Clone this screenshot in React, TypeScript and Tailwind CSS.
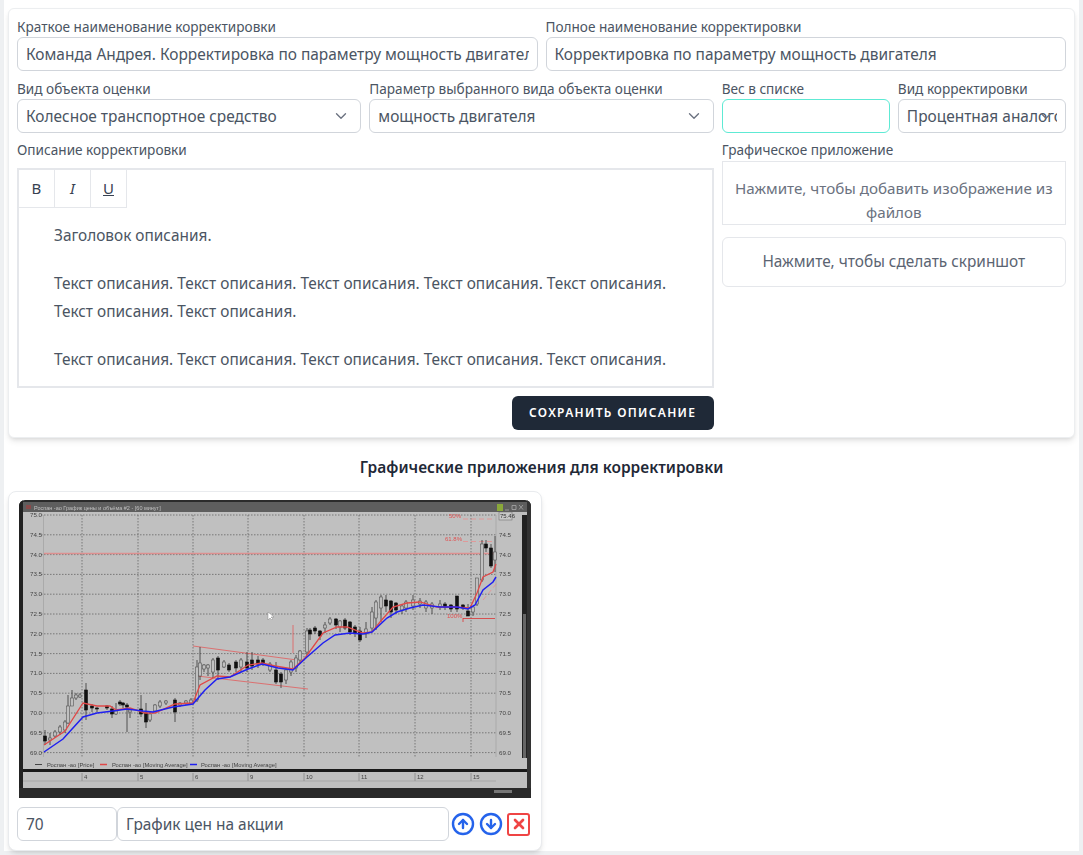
import React from "react";
import { CircleArrowUp, CircleArrowDown, X, ChevronDown } from "lucide-react";

const red: [number, number][] = [[44,745],[65,731],[83,703],[97,706],[110,706],[116,710],[130,708],[145,713],[155,713],[175,704],[193,703],[200,685],[217,676],[230,677],[248,665],[262,663],[275,666],[293,669],[305,658],[323,633],[337,627],[347,627],[363,633],[372,632],[380,622],[393,607],[407,603],[420,602],[437,607],[453,607],[470,608],[477,593],[483,577],[493,572],[496,564]];
const blue: [number, number][] = [[44,752],[63,739],[83,717],[97,713],[113,711],[127,709],[143,711],[153,712],[173,707],[193,704],[205,690],[217,679],[230,677],[248,669],[262,664],[278,668],[293,670],[307,657],[323,643],[335,635],[350,633],[363,634],[372,632],[387,618],[397,612],[410,608],[423,605],[440,607],[457,607],[468,609],[475,605],[483,590],[493,582],[496,577]];

// x, high, low, bodyTop, bodyBottom, black
const candles: [number, number, number, number, number, number][] = [
[45,730,745,736,741,1],[50,733,745,738,740,0],[55,730,738,732,736,0],[60,725,735,727,732,0],[65,720,733,722,730,0],[68,695,724,706,723,0],[72,690,706,698,706,0],[76,693,700,695,698,0],[80,693,698,695,697,0],
[86,683,720,690,710,1],[92,704,712,706,708,1],[97,707,712,708,709,1],[107,705,710,706,708,1],[112,706,718,709,714,1],[116,703,715,711,714,0],[120,700,706,702,704,1],[123,702,708,703,705,1],[127,703,732,705,707,1],[130,708,718,710,712,0],
[141,695,717,709,714,1],[146,703,728,713,722,1],[150,712,722,714,720,0],[155,704,712,705,711,0],[160,700,708,702,706,0],[166,700,705,701,703,0],[175,698,722,700,712,1],[180,702,707,703,705,0],[186,700,705,701,703,0],[191,698,704,700,703,0],
[197,660,702,667,700,0],[200,647,680,663,676,0],[204,664,672,665,669,0],[208,664,676,665,668,0],[213,658,678,660,672,0],[218,656,680,658,670,1],[224,660,668,662,667,0],[229,663,672,665,670,1],[236,660,672,662,668,1],[241,658,672,660,667,0],[247,652,672,662,668,1],[252,652,670,660,666,1],[258,656,668,660,664,1],[263,658,666,660,663,1],[270,662,672,664,670,0],[276,662,684,670,682,1],[281,672,688,674,682,1],[286,668,684,670,680,0],[291,660,676,662,672,0],[296,655,672,658,668,0],
[300,650,664,651,660,0],[307,628,655,631,652,0],[310,628,640,630,634,1],[315,626,634,628,631,1],[320,630,640,631,636,1],[325,622,633,625,628,0],[330,617,625,619,623,0],[336,618,629,619,625,1],[340,620,632,621,627,0],[345,618,630,620,628,1],[350,621,635,622,632,1],[355,625,637,627,633,1],[360,627,642,631,640,1],[366,622,638,629,634,0],[372,607,632,612,628,0],[376,600,630,602,618,0],[381,595,622,597,608,0],[386,595,612,600,606,1],[391,600,618,601,612,1],[396,602,614,603,610,1],[402,604,614,606,610,0],[406,600,612,602,608,0],[413,595,610,600,606,0],[420,598,608,601,604,0],[426,600,612,602,608,0],[432,602,614,604,608,0],[440,600,610,604,607,0],[445,602,610,604,607,1],[451,604,612,605,609,1],[457,596,612,596,609,1],[463,604,610,605,608,1],[468,604,615,611,616,1],[473,606,616,607,612,0],[477,578,606,578,604,0],[482,540,582,544,580,0],[486,540,552,544,548,1],[491,544,568,548,566,1],[495,536,572,552,560,0]];

function Chart() {
  const ys = ["75.0","74.5","74.0","73.5","73.0","72.5","72.0","71.5","71.0","70.5","70.0","69.5","69.0"];
  const xs = [82,138,193,248,304,359,415,471];
  const dates = ["4","5","6","9","10","11","12","15"];
  const yAt = (i: number) => 515 + i * 19.8;
  const pts = (a: [number, number][]) => a.map((p) => p.join(",")).join(" ");
  return (
    <svg viewBox="19 500 512 298" width="512" height="298" className="block rounded-t-md blur-[0.4px]">
      <rect x="19" y="500" width="512" height="298" fill="#2b2b2b" />
      <rect x="21" y="502" width="508" height="10" fill="#5e5e5e" />
      <rect x="23" y="512" width="504" height="258" fill="#c0c0c0" />
      <rect x="23" y="772" width="504" height="16" fill="#c0c0c0" />
      <text x="34" y="509.5" fontSize="5.5" fill="#c0c0c0" fontFamily="Liberation Sans, sans-serif">Роспан -ао График цены и объёма #2 - [60 минут]</text>
      <rect x="26" y="505" width="5" height="4" fill="#8a4a4a" />
      <rect x="497" y="504" width="6" height="7" fill="#8aa83a" />
      <path d="M505 510h4M512 505.500h4v4h-4zM519 505l4 4.500M523 505l-4 4.500" stroke="#aaa" strokeWidth="0.8" fill="none" />
      {ys.map((t, i) => (
        <g key={t}>
          <line x1="41" x2="496" y1={yAt(i)} y2={yAt(i)} stroke="#666" strokeWidth="0.8" strokeDasharray="1.500 1.500" />
          <text x="30" y={yAt(i) + 2} fontSize="6.2" fill="#444" fontFamily="Liberation Sans, sans-serif">{t}</text>
          {i > 0 && <text x="499" y={yAt(i) + 2} fontSize="6.2" fill="#444" fontFamily="Liberation Sans, sans-serif">{t}</text>}
        </g>
      ))}
      {xs.map((x, i) => (
        <g key={x}>
          <line x1={x} x2={x} y1="515" y2="757" stroke="#666" strokeWidth="0.8" strokeDasharray="1.500 1.500" />
          <line x1={x} x2={x} y1="773" y2="781" stroke="#888" strokeWidth="0.8" />
          <text x={x + 2} y="779" fontSize="6" fill="#444" fontFamily="Liberation Sans, sans-serif">{dates[i]}</text>
        </g>
      ))}
      <line x1="43.500" x2="43.500" y1="515" y2="757" stroke="#a5a5a5" strokeWidth="0.8" />
      <line x1="496" x2="496" y1="515" y2="757" stroke="#a5a5a5" strokeWidth="0.8" />
      <line x1="23" x2="496" y1="781" y2="781" stroke="#999" strokeWidth="0.6" />
      <line x1="44" x2="496" y1="553.500" y2="553.500" stroke="#dd9090" strokeWidth="1.400" />
      <path d="M193 646L297 660M197 676L308 689M293 625V653" stroke="#e25c5c" strokeWidth="0.8" fill="none" />
      <path d="M463 519H495M463 541.500H495M483 600L497 583" stroke="#e88" strokeWidth="0.7" strokeDasharray="5 3" fill="none" />
      <path d="M463 618.500H495M463 618V622" stroke="#d33" strokeWidth="0.8" fill="none" />
      <text x="449" y="518" fontSize="6" fill="#e05050" fontFamily="Liberation Sans, sans-serif">50%</text>
      <text x="445" y="541" fontSize="6" fill="#e05050" fontFamily="Liberation Sans, sans-serif">61.8%</text>
      <text x="447" y="618" fontSize="6" fill="#e05050" fontFamily="Liberation Sans, sans-serif">100%</text>
      {candles.map(([x, h, l, t, b, k]) => (
        <g key={x}>
          <line x1={x} x2={x} y1={h} y2={l} stroke="#333" strokeWidth="0.8" />
          <rect x={x - 1.500} y={t} width="3" height={Math.max(b - t, 1)} fill={k ? "#111" : "#c0c0c0"} stroke={k ? "#111" : "#555"} strokeWidth="0.6" />
        </g>
      ))}
      <polyline points={pts(red)} fill="none" stroke="#e04848" strokeWidth="1.300" />
      <polyline points={pts(blue)} fill="none" stroke="#2020f0" strokeWidth="1.500" />
      <path d="M268 612v8l2-2 2 2 1-1-2-2h3z" fill="#fff" stroke="#777" strokeWidth="0.4" />
      <rect x="499" y="512" width="13" height="8" fill="#c8c8c8" stroke="#666" strokeWidth="0.5" />
      <text x="500" y="518" fontSize="6" fill="#333" fontFamily="Liberation Sans, sans-serif">75.46</text>
      <rect x="522" y="515" width="5" height="243" fill="#222" />
      <rect x="523" y="614" width="3" height="144" fill="#666" />
      <line x1="35" x2="42" y1="764.500" y2="764.500" stroke="#444" strokeWidth="1" />
      <text x="47" y="766.500" fontSize="5.800" fill="#444" fontFamily="Liberation Sans, sans-serif">Роспан -ао [Price]</text>
      <line x1="100" x2="107" y1="764.500" y2="764.500" stroke="#e04848" strokeWidth="1.400" />
      <text x="112" y="766.500" fontSize="5.800" fill="#444" fontFamily="Liberation Sans, sans-serif">Роспан -ао [Moving Average]</text>
      <line x1="190" x2="197" y1="764.500" y2="764.500" stroke="#2020f0" strokeWidth="1.400" />
      <text x="201" y="766.500" fontSize="5.800" fill="#444" fontFamily="Liberation Sans, sans-serif">Роспан -ао [Moving Average]</text>
      <rect x="19" y="769" width="512" height="3" fill="#1a1a1a" />
      <rect x="19" y="500" width="4" height="298" fill="#222" />
      <rect x="527" y="500" width="4" height="298" fill="#333" />
      <rect x="19" y="788" width="512" height="10" fill="#2a2a2a" />
      <rect x="494" y="790" width="18" height="3" fill="#777" />
    </svg>
  );
}

const inputCls = "block w-full h-[34px] rounded-md border border-[#d1d5db] bg-white pl-[8px] pr-[8px] text-[15.45px] text-[#4b5563] outline-none";

function Field({ label, span, children }: { label: string; span: string; children: React.ReactNode }) {
  return (
    <div className={span}>
      <div className="h-[20px] text-[13.6px] leading-[20px] text-[#4b5563]">{label}</div>
      {children}
    </div>
  );
}

function Select({ value }: { value: string }) {
  return (
    <div className="relative">
      <input readOnly value={value} className={inputCls} />
      <ChevronDown size={18} strokeWidth={1.8} className="absolute right-[11px] top-[8px] text-[#6b7280]" />
    </div>
  );
}

export default function App() {
  const P1 = "Текст описания. Текст описания. Текст описания. Текст описания. Текст описания.";
  return (
    <div className="min-h-[855px] bg-[#eef0f2] font-['Noto_Sans',sans-serif] text-[#4b5563]">
      <div className="ml-[4px] w-[1075px] h-[851px] bg-white pl-[4px] pr-[4px] pt-[1px]">
        <div className="mt-[7px] h-[430px] w-[1067px] rounded-md border border-[#eceef0] bg-white px-[8px] pt-[8px] shadow-md">
          <div className="grid grid-cols-12 gap-x-2 gap-y-[8px]">
            <Field label="Краткое наименование корректировки" span="col-span-6">
              <input readOnly value="Команда Андрея. Корректировка по параметру мощность двигателя" className={inputCls} />
            </Field>
            <Field label="Полное наименование корректировки" span="col-span-6">
              <input readOnly value="Корректировка по параметру мощность двигателя" className={inputCls} />
            </Field>
            <Field label="Вид объекта оценки" span="col-span-4">
              <Select value="Колесное транспортное средство" />
            </Field>
            <Field label="Параметр выбранного вида объекта оценки" span="col-span-4">
              <Select value="мощность двигателя" />
            </Field>
            <Field label="Вес в списке" span="col-span-2">
              <input readOnly className="block h-[34px] w-full rounded-md border border-[#5eead4] bg-white outline-none" />
            </Field>
            <Field label="Вид корректировки" span="col-span-2">
              <Select value="Процентная аналоговая" />
            </Field>
          </div>
          <div className="mt-[7px] grid grid-cols-12 gap-x-2">
            <div className="col-span-8">
              <div className="h-[20px] text-[13.6px] leading-[20px]">Описание корректировки</div>
              <div className="mt-[8px] h-[220px] border-2 border-[#e5e7eb]">
                <div className="flex h-[38px]">
                  <div className="flex h-[38px] w-[36px] items-center justify-center border-r border-b border-[#e5e7eb] text-[15px] text-[#374151]">B</div>
                  <div className="flex h-[38px] w-[36px] items-center justify-center border-r border-b border-[#e5e7eb] text-[15px] italic text-[#374151]">I</div>
                  <div className="flex h-[38px] w-[36px] items-center justify-center border-r border-b border-[#e5e7eb] text-[15px] underline text-[#374151]">U</div>
                </div>
                <div className="pl-[35px] pr-[30px] pt-[14px] text-[15.4px] leading-[28px] text-[#4b5563]">
                  <p className="h-[28px] whitespace-nowrap">Заголовок описания.</p>
                  <p className="mt-[20px]">{P1} Текст описания. Текст описания.</p>
                  <p className="mt-[20px] whitespace-nowrap">{P1}</p>
                </div>
              </div>
              <div className="mt-[8px] flex justify-end">
                <button className="h-[34px] w-[202px] rounded-md bg-[#1f2937] text-[12px] font-semibold uppercase tracking-[0.11em] text-white">Сохранить описание</button>
              </div>
            </div>
            <div className="col-span-4">
              <div className="h-[20px] text-[13.6px] leading-[20px]">Графическое приложение</div>
              <div className="mt-[1px] flex h-[64px] items-center justify-center border border-[#e5e7eb] px-[4px] pt-[14px] text-center text-[15.2px] leading-[24px] text-[#6b7280]">
                Нажмите, чтобы добавить изображение из файлов
              </div>
              <div className="mt-[12px] flex h-[50px] items-center justify-center rounded-md border border-[#e5e7eb] text-[15.4px] text-[#5b6472]">
                Нажмите, чтобы сделать скриншот
              </div>
            </div>
          </div>
        </div>
        <h2 className="mt-[17px] h-[24px] text-center text-[15.5px] font-semibold leading-[24px] text-[#1f2937]">Графические приложения для корректировки</h2>
        <div className="mt-[12px] h-[360px] w-[534px] rounded-lg border border-[#e9ebee] bg-white pl-[10px] pt-[8px] shadow-md">
          <Chart />
          <div className="ml-[-2px] mt-[9px] flex items-center">
            <input readOnly value="70" className={`${inputCls} !w-[100px] shrink-0`} />
            <input readOnly value="График цен на акции" className={`${inputCls} !w-[332px] shrink-0`} />
            <div className="ml-[2px] flex items-center gap-[4px]">
              <CircleArrowUp size={24} strokeWidth={2.4} className="text-[#2563eb]" />
              <CircleArrowDown size={24} strokeWidth={2.4} className="text-[#2563eb]" />
              <div className="flex h-[23px] w-[23px] shrink-0 items-center justify-center rounded-[3px] border-2 border-[#ef4444]">
                <X size={16} strokeWidth={4} className="shrink-0 text-[#ef4444]" />
              </div>
            </div>
          </div>
        </div>
      </div>
    </div>
  );
}
